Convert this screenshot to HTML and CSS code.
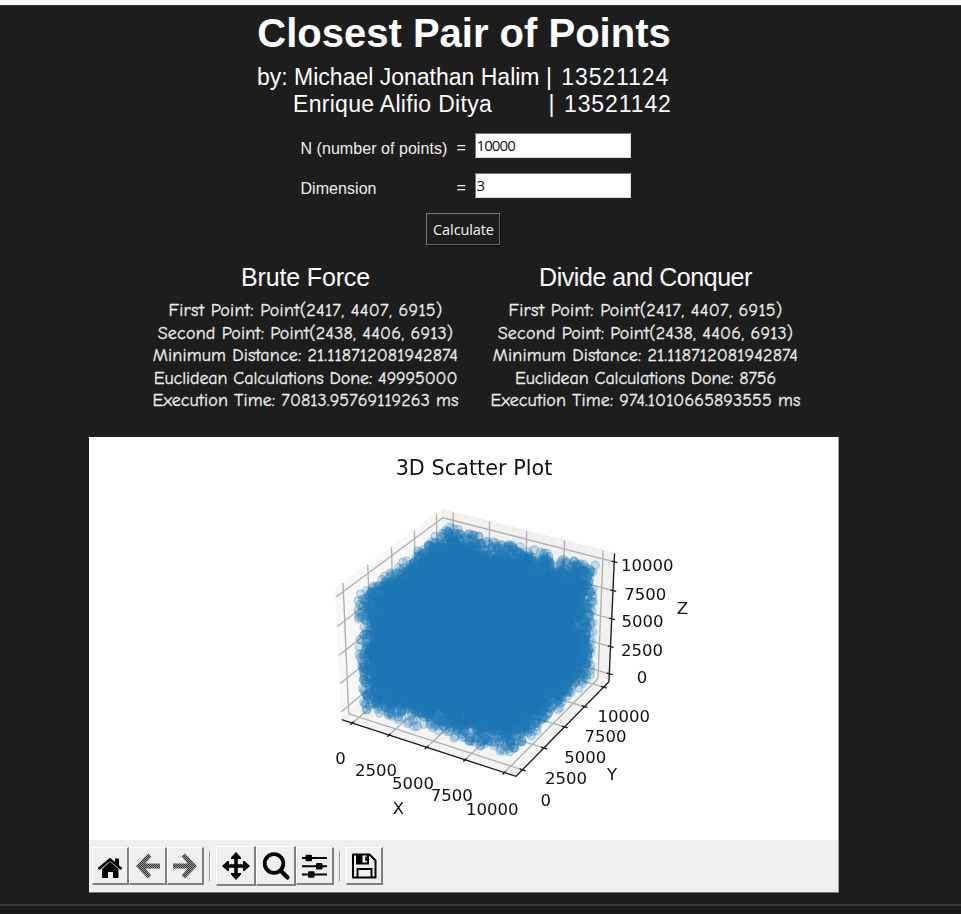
FILE: index.html
```html
<!DOCTYPE html>
<html lang="en">
<head>
<meta charset="utf-8">
<title>Closest Pair of Points</title>
<link rel="stylesheet" href="styles.css">
</head>
<body>
<main class="window">
  <h1 class="title">Closest Pair of Points</h1>
  <div class="authors"><div class="author first">by: Michael Jonathan Halim | <span class="nim">13521124</span></div><div class="author second"><span class="name">Enrique Alifio Ditya</span>         | <span class="nim">13521142</span></div></div>
  <form class="form">
    <label class="label" for="n">N (number of points)</label><span class="eq">=</span><input class="entry" id="n" value="10000">
    <label class="label dim" for="d">Dimension</label><span class="eq">=</span><input class="entry" id="d" value="3">
  </form>
  <button class="calculate" type="button">Calculate</button>
  <section class="results">
    <div class="result">
      <h2 class="method">Brute Force</h2>
      <p class="row r1">First Point: Point(2417, 4407, 6915)</p>
      <p class="row r2">Second Point: Point(2438, 4406, 6913)</p>
      <p class="row r3">Minimum Distance: 21.118712081942874</p>
      <p class="row r4">Euclidean Calculations Done: 49995000</p>
      <p class="row r5">Execution Time: 70813.95769119263 ms</p>
    </div>
    <div class="result">
      <h2 class="method wide">Divide and Conquer</h2>
      <p class="row r1">First Point: Point(2417, 4407, 6915)</p>
      <p class="row r2">Second Point: Point(2438, 4406, 6913)</p>
      <p class="row r3">Minimum Distance: 21.118712081942874</p>
      <p class="row r4">Euclidean Calculations Done: 8756</p>
      <p class="row r5">Execution Time: 974.1010665893555 ms</p>
    </div>
  </section>
  <section class="figure">
    <div class="plot">
      <svg class="layer" viewBox="89 437 750 403"><g id="axes"></g></svg>
      <canvas class="layer" id="points" width="750" height="403"></canvas>
      <svg class="layer labels" viewBox="89 437 750 403">
        <text class="plot-title" x="474" y="474.5">3D Scatter Plot</text>
        <text x="340.5" y="763.5">0</text><text x="376" y="776">2500</text><text x="413" y="788.7">5000</text><text x="451.7" y="801.3">7500</text><text x="492.3" y="815">10000</text><text x="398.5" y="814">X</text>
        <text x="545.7" y="805.8">0</text><text x="566" y="783.7">2500</text><text x="585.3" y="762.5">5000</text><text x="605.5" y="742.3">7500</text><text x="623.7" y="722.3">10000</text><text x="612" y="780">Y</text>
        <text x="642" y="682.5">0</text><text x="642" y="656">2500</text><text x="642.5" y="627.3">5000</text><text x="645.3" y="600">7500</text><text x="647.3" y="571">10000</text><text x="682.3" y="614">Z</text>
      </svg>
    </div>
    <div class="toolbar">
      <button class="tool" aria-label="Home"><svg width="28" height="28" viewBox="0 0 28 28"><path d="M14 9.800 22.500 17V25q0 1-1 1h-4.500v-6h-5v6H7q-1 0-1-1v-8z"/><path d="M2.500 17 14 7.500l11.500 9.500" fill="none" stroke="#000" stroke-width="2.600"/><path d="M19 6.500h4v8l-4-3.200z"/></svg></button>
      <button class="tool" aria-label="Back"><svg width="28" height="28" viewBox="0 0 28 28"><use href="#arrow"/></svg></button>
      <button class="tool" aria-label="Forward"><svg width="28" height="28" viewBox="0 0 28 28"><use href="#arrow" transform="translate(28 0) scale(-1 1)"/></svg></button>
      <i class="sep"></i>
      <button class="tool large" aria-label="Pan"><svg width="30" height="30" viewBox="0 0 30 30"><path d="M15 1 20 6.500V8H16.800v5.200H22V10h1.500L29 15l-5.500 5H22v-3.200h-5.200V22H20v1.500L15 29l-5-5.500V22h3.200v-5.200H8V20H6.500L1 15l5.500-5H8v3.200h5.200V8H10V6.500z"/></svg></button>
      <button class="tool large" aria-label="Zoom"><svg width="30" height="30" viewBox="0 0 30 30"><circle cx="13" cy="12.500" r="9.300" fill="none" stroke="#000" stroke-width="3.800"/><path d="m19.500 19.500 7 7" stroke="#000" stroke-width="4.200" stroke-linecap="round"/></svg></button>
      <button class="tool" aria-label="Configure subplots"><svg width="28" height="28" viewBox="0 0 28 28"><path d="M2 6h25M2 14.200h25M2 22.500h25" stroke="#000" stroke-width="2.100"/><rect x="5.500" y="2.800" width="6.500" height="6.400" rx="1.200"/><rect x="16" y="11" width="6.500" height="6.400" rx="1.200"/><rect x="8" y="19.300" width="6.500" height="6.400" rx="1.200"/></svg></button>
      <i class="sep"></i>
      <button class="tool" aria-label="Save"><svg width="28" height="28" viewBox="0 0 28 28"><g fill="none" stroke="#000" stroke-width="2"><path d="M3 2.500h16.500L25.500 8.500V25.500H3z" stroke-linejoin="round"/><path d="M7 3v8.500h11V3M7.500 25v-8h14V25"/></g><path d="M7 3h5.500v8.500H7zM14 4.500h3v4.500h-3z"/><path d="M13 4h2.300v5H13z" fill="#efefef"/></svg></button>
    </div>
  </section>
  <footer class="status"></footer>
</main>
<svg class="defs" width="0" height="0"><defs>
  <pattern id="dither" width="2" height="2" patternUnits="userSpaceOnUse"><rect width="2" height="2" fill="#999"/><path d="M0 0h1v1H0zM1 1h1v1H1z" fill="#303030"/></pattern>
  <path id="arrow" d="M2 14 14 1.500l3.300 3L11.500 11.500H26v5H11.500l5.800 7-3.300 3z" fill="url(#dither)"/>
</defs></svg>
<script src="plot.js"></script>
</body>
</html>
```

FILE: plot.js
```js
// Perspective view of the unit cube: elevation 30, azimuth -60, aspect 4:4:3.
function project(x, y, z) {
  const a = (x - 0.5) * 1.142857, b = (y - 0.5) * 1.142857, c = (z - 0.5) * 0.857143;
  const u = 0.866025 * a + 0.5 * b;
  const v = -0.25 * a + 0.433013 * b + 0.866025 * c;
  const w = 10 - (0.433013 * a - 0.75 * b + 0.5 * c);
  return [477.7 + 1748 * u / w, 636.8 - 1748 * v / w];
}
const axes = document.getElementById('axes');
function draw(points, fill, stroke, width) {
  const p = document.createElementNS('http://www.w3.org/2000/svg', 'path');
  p.setAttribute('d', 'M' + points.map(q => project(...q).map(n => n.toFixed(2)).join(' ')).join('L') + (fill === 'none' ? '' : 'Z'));
  p.setAttribute('fill', fill);
  p.setAttribute('stroke', stroke);
  p.setAttribute('stroke-width', width);
  axes.appendChild(p);
}
draw([[0,0,0],[0,1,0],[0,1,1],[0,0,1]], '#f8f8f8', '#f5f5f5', 1);
draw([[0,1,0],[1,1,0],[1,1,1],[0,1,1]], '#f1f1f1', '#eeeeee', 1);
draw([[0,0,0],[1,0,0],[1,1,0],[0,1,0]], '#f4f4f4', '#f1f1f1', 1);
const pad = 0.0636, span = 1 - 2 * pad;
for (let i = 0; i < 5; i++) {
  const t = pad + span * i / 4;
  draw([[t,0,0],[t,1,0],[t,1,1]], 'none', '#b0b0b0', 1.35);
  draw([[1,t,0],[0,t,0],[0,t,1]], 'none', '#b0b0b0', 1.35);
  draw([[0,0,t],[0,1,t],[1,1,t]], 'none', '#b0b0b0', 1.35);
}
draw([[0,0,0],[1,0,0],[1,1,0],[1,1,1]], 'none', '#1b1b1b', 1.35);
for (let i = 0; i < 5; i++) {
  const t = pad + span * i / 4;
  draw([[t,-0.018,0],[t,0.014,0]], 'none', '#1b1b1b', 1.35);
  draw([[1.018,t,0],[0.985,t,0]], 'none', '#1b1b1b', 1.35);
  draw([[1.018,1,t],[0.985,1,t]], 'none', '#1b1b1b', 1.35);
}

const ctx = document.getElementById('points').getContext('2d');
let seed = 13521124;
function random() {
  seed = (seed + 0x6D2B79F5) | 0;
  let t = Math.imul(seed ^ (seed >>> 15), 1 | seed);
  t = (t + Math.imul(t ^ (t >>> 7), 61 | t)) ^ t;
  return ((t ^ (t >>> 14)) >>> 0) / 4294967296;
}
ctx.translate(-89, -437);
ctx.fillStyle = 'rgba(31,119,180,.2)';
ctx.strokeStyle = 'rgba(31,119,180,.27)';
ctx.lineWidth = 1.3;
for (let i = 0; i < 21000; i++) {
  const [x, y] = project(pad + span * random(), pad + span * random(), pad + span * random());
  ctx.beginPath();
  ctx.arc(x, y, 4.1, 0, Math.PI * 2);
  ctx.fill();
  ctx.stroke();
}
```

FILE: styles.css
```css
* { box-sizing: border-box; }
body { margin: 0; background: #fff; font-family: "Liberation Sans", Arial, sans-serif; color: #fff; }
.window { display: flex; flex-direction: column; align-items: center; margin-top: 5px; height: 909px; padding-right: 33px; background: #1d1d1d; border-top: 1px solid #333; overflow: hidden; }
.title { margin: 4px 0 0; height: 46px; font-size: 40px; line-height: 46px; white-space: nowrap; }
.authors { width: 414px; height: 56px; margin-top: 8px; font-size: 23px; line-height: 27px; white-space: pre; }
.author.second { padding-left: 36px; }
.nim { letter-spacing: .9px; margin-left: 3px; }
.name { letter-spacing: .3px; margin-right: -1px; }
.form { display: grid; grid-template-columns: 156px 19px 156px; grid-template-rows: 25px 25px; row-gap: 15px; margin: 13px 0 0 2px; align-items: center; font-size: 16px; }
.label { white-space: nowrap; padding: 6px 0 0 1px; color: #eee; letter-spacing: .05px; }
.eq { padding: 5px 0 0 1px; color: #eee; }
.entry { width: 156px; height: 25px; padding: 0 1px 1px; border: 1px solid #777; border-right-color: #ddd; border-bottom-color: #ddd; background: #fff; color: #111; font: 15px "Open Sans", sans-serif; letter-spacing: -.9px; }
.calculate { width: 74px; height: 32px; margin: 15px 0 0 -2px; padding: 0 0 0 1px; border: 1px solid #777; border-right-color: #666; border-bottom-color: #666; box-shadow: 1px 1px #0c0c0c; background: #1d1d1d; color: #f4f4f4; font: 14.500px "Open Sans", sans-serif; letter-spacing: -.1px; }
.results { display: grid; grid-template-columns: 340px 340px; margin: 16px 0 0 23px; height: 176px; text-align: center; }
.method { margin: 0 0 7px; font-size: 25px; font-weight: 400; line-height: 32px; letter-spacing: -.15px; }
.method.wide { letter-spacing: -.45px; }
.row { margin: 0; font: 18px/22.500px "Comic Neue", "Comic Sans MS", Lato, sans-serif; white-space: nowrap; color: #eee; -webkit-text-stroke: .3px #eee; }
.r1 { letter-spacing: .31px; }
.r2 { letter-spacing: .19px; }
.r3 { letter-spacing: .15px; }
.r4 { letter-spacing: -.1px; }
.r5 { letter-spacing: .1px; }
.figure { width: 750px; height: 456px; flex: none; border-bottom: 1px solid #777; background: #efefef; box-shadow: inset -1px 0 #a0a0a0; }
.plot { display: grid; width: 749px; height: 403px; background: #fff; }
.layer { grid-area: 1 / 1; width: 750px; height: 403px; display: block; }
.labels { font-family: "DejaVu Sans", sans-serif; font-size: 16.500px; fill: #111; text-anchor: middle; }
.plot-title { font-size: 20.800px; }
.toolbar { display: flex; align-items: center; height: 52px; padding: 0 0 0 3px; }
.tool { display: grid; place-items: center; width: 37.400px; height: 38px; padding: 0; border: solid; border-width: 1px 2px 2px 1px; border-color: #fff #808080 #808080 #fff; background: #efefef; }
.tool.large { width: 40px; height: 40px; }
.tool svg { display: block; }
.sep { width: 2px; height: 30px; margin: 0 5px; border-left: 1px solid #999; border-right: 1px solid #fff; }
.status { width: 961px; margin: 11px -33px 0 0; border-top: 2px solid #383838; flex: 1; background: #191919; }
.defs { display: block; }
```
